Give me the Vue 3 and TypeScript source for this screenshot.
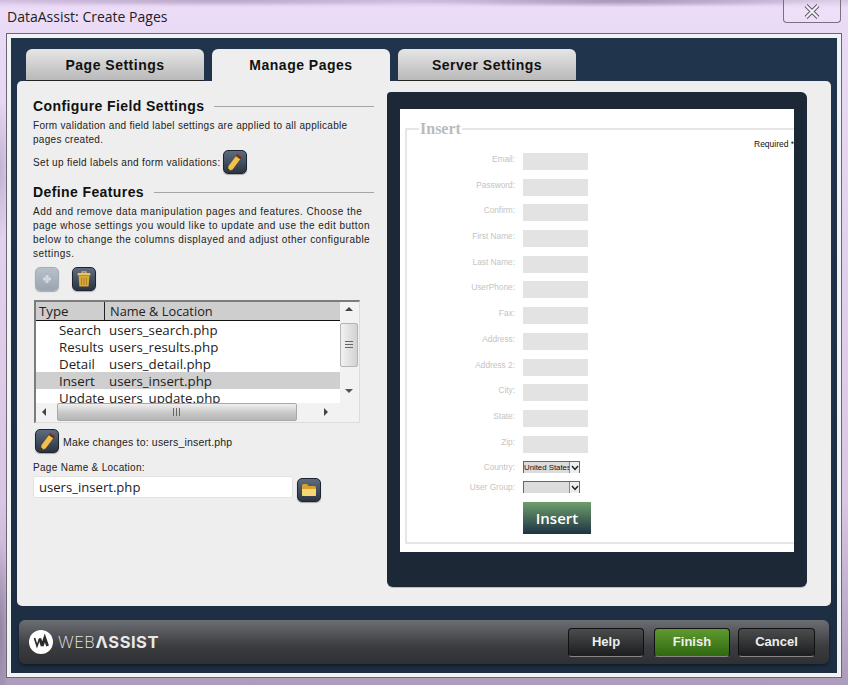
<script setup lang="ts">
import { ref } from 'vue'

const tabs = ['Page Settings', 'Manage Pages', 'Server Settings']
const activeTab = ref('Manage Pages')

const pages = [
  { type: 'Search', file: 'users_search.php' },
  { type: 'Results', file: 'users_results.php' },
  { type: 'Detail', file: 'users_detail.php' },
  { type: 'Insert', file: 'users_insert.php' },
  { type: 'Update', file: 'users_update.php' },
]
const selected = ref('Insert')

const fields = ['Email', 'Password', 'Confirm', 'First Name', 'Last Name', 'UserPhone', 'Fax', 'Address', 'Address 2', 'City', 'State', 'Zip']
</script>

<template>
  <div class="page">
    <div class="titlebar">
      <span class="title">DataAssist: Create Pages</span>
      <button class="close">
        <svg width="16" height="15" viewBox="0 0 16 15"><path d="M2 1.5 L14 13.5 M14 1.5 L2 13.5" stroke="#5a5560" stroke-width="4" /><path d="M2 1.5 L14 13.5 M14 1.5 L2 13.5" stroke="#f4f0f8" stroke-width="2.2" /></svg>
      </button>
    </div>

    <div class="window">
      <div class="inner">
        <div class="tabs">
          <div v-for="tab in tabs" :key="tab" class="tab" :class="{ active: tab === activeTab }" @click="activeTab = tab">{{ tab }}</div>
        </div>

        <div class="panel">
          <div class="left">
            <div class="heading"><span>Configure Field Settings</span><i></i></div>
            <p class="text intro">Form validation and field label settings are applied to all applicable pages created.</p>
            <div class="inline-row first-edit">
              <span class="text">Set up field labels and form validations:</span>
              <button class="icon-btn">
                <svg width="17" height="19" viewBox="0 0 16 18"><path d="M10.5 1 L15 4.3 L6.2 16 L1.5 17.2 L2 12.4 Z" fill="#f0c14e" stroke="#3a3026" stroke-width="0.5" /><path d="M10.5 1 L15 4.3 L13.6 6.2 L9.1 2.9 Z" fill="#6d2f2a" /><path d="M1.5 17.2 L1.8 14.6 L3.8 16.1 Z" fill="#2a2018" /></svg>
              </button>
            </div>

            <div class="heading second"><span>Define Features</span><i></i></div>
            <p class="text features">Add and remove data manipulation pages and features. Choose the page whose settings you would like to update and use the edit button below to change the columns displayed and adjust other configurable settings.</p>

            <div class="tools">
              <button class="icon-btn disabled">
                <svg width="12" height="12" viewBox="0 0 12 12"><path d="M6 2 V10 M2 6 H10" stroke="#d3d8de" stroke-width="3" /></svg>
              </button>
              <button class="icon-btn">
                <svg width="14" height="16" viewBox="0 0 14 16"><path d="M5 2 V0.8 H9 V2" fill="none" stroke="#d8b658" stroke-width="1.2" /><rect x="0.5" y="2" width="13" height="2.6" rx="1" fill="#e4c76a" /><path d="M1.6 5 H12.4 L11.6 15.4 H2.4 Z" fill="#d9ab3d" /><path d="M4.6 6.5 V14 M7 6.5 V14 M9.4 6.5 V14" stroke="#a97c26" stroke-width="0.9" /></svg>
              </button>
            </div>

            <div class="list">
              <div class="list-body">
                <div class="list-head">
                  <div class="col-type">Type</div>
                  <div class="col-name">Name &amp; Location</div>
                </div>
                <div class="rows">
                  <div v-for="p in pages" :key="p.type" class="row" :class="{ selected: p.type === selected }" @click="selected = p.type">
                    <span class="cell-type">{{ p.type }}</span>
                    <span>{{ p.file }}</span>
                  </div>
                </div>
                <div class="hscroll">
                  <span class="arrow left-arrow"></span>
                  <div class="hthumb"><span class="grip-v"></span></div>
                  <span class="arrow right-arrow"></span>
                </div>
              </div>
              <div class="vscroll">
                <span class="arrow up-arrow"></span>
                <div class="vthumb"><span class="grip-h"></span></div>
                <span class="arrow down-arrow"></span>
              </div>
            </div>

            <div class="inline-row changes">
              <button class="icon-btn">
                <svg width="17" height="19" viewBox="0 0 16 18"><path d="M10.5 1 L15 4.3 L6.2 16 L1.5 17.2 L2 12.4 Z" fill="#f0c14e" stroke="#3a3026" stroke-width="0.5" /><path d="M10.5 1 L15 4.3 L13.6 6.2 L9.1 2.9 Z" fill="#6d2f2a" /><path d="M1.5 17.2 L1.8 14.6 L3.8 16.1 Z" fill="#2a2018" /></svg>
              </button>
              <span class="text small">Make changes to: users_insert.php</span>
            </div>

            <div class="text field-label">Page Name &amp; Location:</div>
            <div class="inline-row name-row">
              <div class="name-input">users_insert.php</div>
              <button class="icon-btn folder">
                <svg width="16" height="14" viewBox="0 0 16 14"><path d="M1 2.5 Q1 1 2.5 1 H6 L7.5 3 H13.5 Q15 3 15 4.5 V12 Q15 13 14 13 H2 Q1 13 1 12 Z" fill="#d9a02c" /><path d="M1 6 H15 V12 Q15 13 14 13 H2 Q1 13 1 12 Z" fill="#f7d774" /></svg>
              </button>
            </div>
          </div>

          <div class="preview">
            <div class="sheet">
              <fieldset class="form">
                <legend>Insert</legend>
                <div class="required">Required *</div>
                <div v-for="f in fields" :key="f" class="form-row">
                  <label>{{ f }}:</label>
                  <div class="fake-input"></div>
                </div>
                <div class="form-row select-row">
                  <label>Country:</label>
                  <div class="fake-select">
                    <span>United States</span>
                    <b><svg width="8" height="6" viewBox="0 0 8 6"><path d="M1 1 L4 4.4 L7 1" fill="none" stroke="#222" stroke-width="1.5" /></svg></b>
                  </div>
                </div>
                <div class="form-row select-row">
                  <label>User Group:</label>
                  <div class="fake-select">
                    <span></span>
                    <b><svg width="8" height="6" viewBox="0 0 8 6"><path d="M1 1 L4 4.4 L7 1" fill="none" stroke="#222" stroke-width="1.5" /></svg></b>
                  </div>
                </div>
                <div class="insert-btn">Insert</div>
              </fieldset>
            </div>
          </div>
        </div>

        <div class="footer">
          <div class="logo">
            <span class="mark">
              <svg width="24" height="24" viewBox="0 0 24 24"><circle cx="12" cy="12" r="12" fill="#fff" /><path d="M5.5 8 L8 16 L10.8 8.5" fill="none" stroke="#2b2b2b" stroke-width="1.7" /><path d="M10.8 8.5 L13.2 16 M13.2 16 L15.8 8 L18.6 16" fill="none" stroke="#2b2b2b" stroke-width="2.8" /></svg>
            </span>
            <span class="brand"><span class="thin">WEB</span><span class="bold">ΛSSIST</span></span>
          </div>
          <div class="actions">
            <button class="btn">Help</button>
            <button class="btn green">Finish</button>
            <button class="btn">Cancel</button>
          </div>
        </div>
      </div>
    </div>
  </div>
</template>

<style>
html, body {
  margin: 0;
  height: 100%;
}
body {
  overflow: hidden;
  background:
    radial-gradient(ellipse 220px 6px at 620px 1px, rgba(150, 130, 165, 0.7), transparent),
    radial-gradient(ellipse 260px 5px at 220px 1px, rgba(170, 150, 185, 0.6), transparent),
    radial-gradient(ellipse 10px 70px at 1px 170px, rgba(180, 165, 200, 0.7), transparent),
    radial-gradient(ellipse 8px 90px at 1px 630px, rgba(130, 120, 145, 0.7), transparent),
    linear-gradient(to bottom, #d5c3e2 0, #ecdcf8 8px, #e9daf5 33px, #d9c6e4 500px, #ad9bbc 685px);
}
</style>

<style scoped>
.page {
  width: 848px;
  height: 685px;
  display: flex;
  flex-direction: column;
  font-family: "Liberation Sans", Arial, sans-serif;
}
.titlebar {
  height: 33px;
  display: flex;
  justify-content: space-between;
  align-items: flex-start;
  padding: 0 7px;
  box-sizing: border-box;
}
.title {
  font-family: "Open Sans", sans-serif;
  font-size: 14px;
  line-height: 19px;
  margin-top: 7px;
  color: #222;
}
.close {
  width: 58px;
  height: 23px;
  padding: 0;
  display: flex;
  align-items: center;
  justify-content: center;
  background: rgba(255, 255, 255, 0.12);
  border: 1px solid #77707f;
  border-top: 0;
  border-radius: 0 0 4px 4px;
}
.window {
  margin-left: 6px;
  width: 836px;
  height: 645px;
  box-sizing: border-box;
  border: 1px solid #6c6670;
  padding: 4px;
  background: #f1f3f4;
}
.inner {
  height: 635px;
  background: linear-gradient(to bottom, #20344c, #1d2e42);
  overflow: hidden;
}
.tabs {
  display: flex;
  align-items: flex-start;
  gap: 8px;
  padding: 11px 0 0 15px;
  height: 43px;
  box-sizing: border-box;
}
.tab {
  width: 178px;
  height: 32px;
  border-radius: 6px 6px 0 0;
  background: linear-gradient(to bottom, #e6e6e6, #b9b9b9);
  border-bottom: 1px solid #222;
  box-sizing: border-box;
  text-align: center;
  font-weight: bold;
  font-size: 14px;
  letter-spacing: 0.5px;
  line-height: 32px;
  color: #111;
}
.tab.active {
  background: #eeeeee;
  border-bottom: 0;
}
.panel {
  margin: 0 6px;
  height: 525px;
  box-sizing: border-box;
  background: #eeeeee;
  border-radius: 5px;
  display: flex;
  padding: 11px 24px 19px 16px;
  gap: 13px;
}
.left {
  width: 341px;
  flex: none;
}
.heading {
  display: flex;
  align-items: center;
  gap: 10px;
  font-weight: bold;
  font-size: 14px;
  letter-spacing: 0.4px;
  line-height: 17px;
  color: #111;
  margin-top: 6px;
}
.heading i {
  flex: 1;
  height: 1px;
  background: #a5a5a5;
}
.heading.second {
  margin-top: 10px;
}
.text {
  font-size: 10px;
  line-height: 14px;
  color: #222;
  letter-spacing: 0.33px;
  margin: 4px 0 0;
}
.text.intro {
  letter-spacing: 0.29px;
}
.text.features {
  letter-spacing: 0.46px;
}
.inline-row {
  display: flex;
  align-items: center;
}
.first-edit {
  height: 24px;
  margin-top: 3px;
  gap: 2px;
}
.first-edit .text {
  margin: 2px 0 0;
}
.changes .text {
  margin: 2px 0 0;
}
.icon-btn {
  width: 24px;
  height: 24px;
  padding: 0;
  flex: none;
  display: flex;
  align-items: center;
  justify-content: center;
  border: 1px solid #1d2531;
  border-radius: 5px;
  background: linear-gradient(to bottom, #5d6c7e, #2b3442);
  box-shadow: 0 1px 1px rgba(0, 0, 0, 0.3);
  box-sizing: border-box;
}
.icon-btn.disabled {
  background: linear-gradient(to bottom, #b8c0c9, #9ba5b0);
  border-color: #a4acb5;
}
.tools {
  display: flex;
  gap: 13px;
  margin: 6px 0 0 2px;
}
.list {
  display: flex;
  width: 326px;
  height: 123px;
  margin: 9px 0 0 1px;
  box-sizing: border-box;
  border-top: 2px solid #7c7c7c;
  border-left: 2px solid #7c7c7c;
  border-right: 1px solid #dcdcdc;
  border-bottom: 1px solid #dcdcdc;
  font-family: "Open Sans", sans-serif;
  font-size: 13.3px;
  color: #222;
  background: #f2f2f2;
}
.list-body {
  width: 304px;
  display: flex;
  flex-direction: column;
}
.list-head {
  display: flex;
  height: 18px;
  line-height: 18px;
  background: #cecece;
  border-bottom: 1px solid #111;
  flex: none;
}
.col-type {
  width: 69px;
  box-sizing: border-box;
  padding-left: 3px;
  border-right: 1px solid #222;
}
.col-name {
  padding-left: 5px;
  font-size: 12.8px;
}
.rows {
  height: 82px;
  overflow: hidden;
  background: #fff;
  flex: none;
}
.row {
  display: flex;
  height: 17px;
  line-height: 19px;
  color: #222;
  white-space: nowrap;
}
.row.selected {
  background: #cfcfcf;
}
.cell-type {
  width: 73px;
  box-sizing: border-box;
  padding-left: 23px;
}
.hscroll {
  flex: 1;
  display: flex;
  align-items: center;
  position: relative;
  width: 322px;
  background: #f2f2f2;
  z-index: 1;
}
.hthumb {
  position: absolute;
  left: 21px;
  top: 0;
  width: 240px;
  height: 18px;
  box-sizing: border-box;
  border: 1px solid #a8a8a8;
  border-radius: 2px;
  background: linear-gradient(to bottom, #f0f0f0, #c8c8c8 55%, #b6b6b6);
  display: flex;
  align-items: center;
  justify-content: center;
}
.grip-v {
  width: 9px;
  height: 8px;
  background: repeating-linear-gradient(to right, #666 0 1px, transparent 1px 3px);
}
.grip-h {
  width: 8px;
  height: 9px;
  background: repeating-linear-gradient(to bottom, #666 0 1px, transparent 1px 3px);
}
.vscroll {
  width: 19px;
  position: relative;
  background: #f2f2f2;
}
.vthumb {
  position: absolute;
  left: 0;
  top: 21px;
  width: 18px;
  height: 44px;
  box-sizing: border-box;
  border: 1px solid #b4b4b4;
  border-radius: 2px;
  background: linear-gradient(to right, #f2f2f2, #d2d2d2);
  display: flex;
  align-items: center;
  justify-content: center;
}
.arrow {
  position: absolute;
  width: 0;
  height: 0;
  border: 4px solid transparent;
}
.up-arrow {
  top: 5px;
  left: 5px;
  border-top: 0;
  border-bottom: 4px solid #444;
}
.down-arrow {
  top: 87px;
  left: 5px;
  border-bottom: 0;
  border-top: 4px solid #555;
}
.left-arrow {
  left: 6px;
  top: 5px;
  border-left: 0;
  border-right: 4px solid #444;
}
.right-arrow {
  left: 288px;
  top: 5px;
  border-right: 0;
  border-left: 4px solid #444;
}
.changes {
  margin: 6px 0 0 2px;
  gap: 4px;
}
.text.small {
  font-size: 10.5px;
  letter-spacing: 0.18px;
}
.field-label {
  margin: 8px 0 0;
  font-size: 10px;
  letter-spacing: 0.3px;
}
.name-row {
  gap: 4px;
  margin-top: 1px;
  align-items: flex-start;
}
.name-input {
  width: 260px;
  height: 22px;
  box-sizing: border-box;
  background: #fff;
  border: 1px solid #e2e2e2;
  border-radius: 2px;
  padding-left: 5px;
  font-family: "Open Sans", sans-serif;
  font-size: 13.1px;
  line-height: 20px;
  color: #222;
}
.icon-btn.folder {
  margin-top: 2px;
}
.preview {
  width: 420px;
  height: 495px;
  flex: none;
  background: #1c2836;
  border-radius: 4px 6px 6px 6px;
  padding: 17px 13px 35px;
  box-sizing: border-box;
  box-shadow: 0 1px 0 #b8bcc4;
}
.sheet {
  width: 394px;
  height: 443px;
  background: #fff;
  overflow: hidden;
  padding: 12px 0 0 5px;
  box-sizing: border-box;
}
.form {
  width: 420px;
  height: 423px;
  margin: 0;
  padding: 0;
  border: 2px solid #e6e6e6;
  box-sizing: border-box;
  position: relative;
}
.form legend {
  margin-left: 12px;
  padding: 0 1px;
  font-family: "Liberation Serif", serif;
  font-weight: bold;
  font-size: 16px;
  line-height: 16px;
  color: #bbb;
}
.required {
  position: absolute;
  left: 347px;
  top: 2px;
  font-size: 8.5px;
  line-height: 11px;
  color: #111;
}
.form-row {
  display: flex;
  height: 25.7px;
}
.form-row:nth-of-type(2) {
  margin-top: 16px;
}
.form-row label {
  width: 108px;
  text-align: right;
  font-size: 8.3px;
  color: #c4c4c4;
  padding-top: 1px;
}
.fake-input {
  margin-left: 8px;
  width: 65px;
  height: 17px;
  background: #e3e3e3;
}
.select-row {
  height: 20px;
}
.fake-select {
  margin-left: 8px;
  width: 57px;
  height: 12px;
  display: flex;
  background: #dcdcdc;
  border: 1px solid #666;
  border-width: 1px 1px 0 1px;
  box-sizing: border-box;
  font-size: 7.8px;
  line-height: 11px;
  color: #111;
  overflow: hidden;
}
.fake-select span {
  flex: 1;
  white-space: nowrap;
  overflow: hidden;
}
.fake-select b {
  width: 9px;
  flex: none;
  background: #eee;
  border-left: 1px solid #888;
  display: flex;
  align-items: center;
  justify-content: center;
}
.insert-btn {
  margin: 1px 0 0 116px;
  width: 68px;
  height: 32px;
  background: linear-gradient(to bottom, #6f9e6c, #1f3343);
  color: #fff;
  font-family: "Open Sans", sans-serif;
  font-weight: 600;
  font-size: 15px;
  line-height: 32px;
  text-align: center;
}
.footer {
  height: 44px;
  margin: 14px 8px 0;
  border-radius: 6px;
  background: linear-gradient(to bottom, #6b6e73, #3b3c3f 60%, #2f3033);
  box-shadow: 0 2px 3px rgba(0, 0, 0, 0.4);
  display: flex;
  align-items: center;
  justify-content: space-between;
  padding: 0 14px 0 10px;
}
.logo {
  display: flex;
  align-items: center;
  gap: 5px;
}
.mark {
  display: flex;
}
.brand {
  color: #e8e8e8;
  font-family: Inter, sans-serif;
  font-size: 16.5px;
  letter-spacing: 0.5px;
}
.thin {
  font-weight: 200;
}
.bold {
  font-weight: 700;
}
.actions {
  display: flex;
  gap: 8px;
}
.btn {
  width: 76px;
  height: 29px;
  padding: 0 0 2px;
  border: 1px solid #111;
  border-bottom-color: #888;
  border-radius: 4px;
  background: linear-gradient(to bottom, #4a4c4e, #1c1d1f);
  color: #eee;
  font-family: "Liberation Sans", sans-serif;
  font-weight: bold;
  font-size: 13px;
}
.btn:last-child {
  width: 77px;
}
.btn.green {
  margin-left: 2px;
  background: linear-gradient(to bottom, #5f9a2f, #2f6810);
}
</style>
